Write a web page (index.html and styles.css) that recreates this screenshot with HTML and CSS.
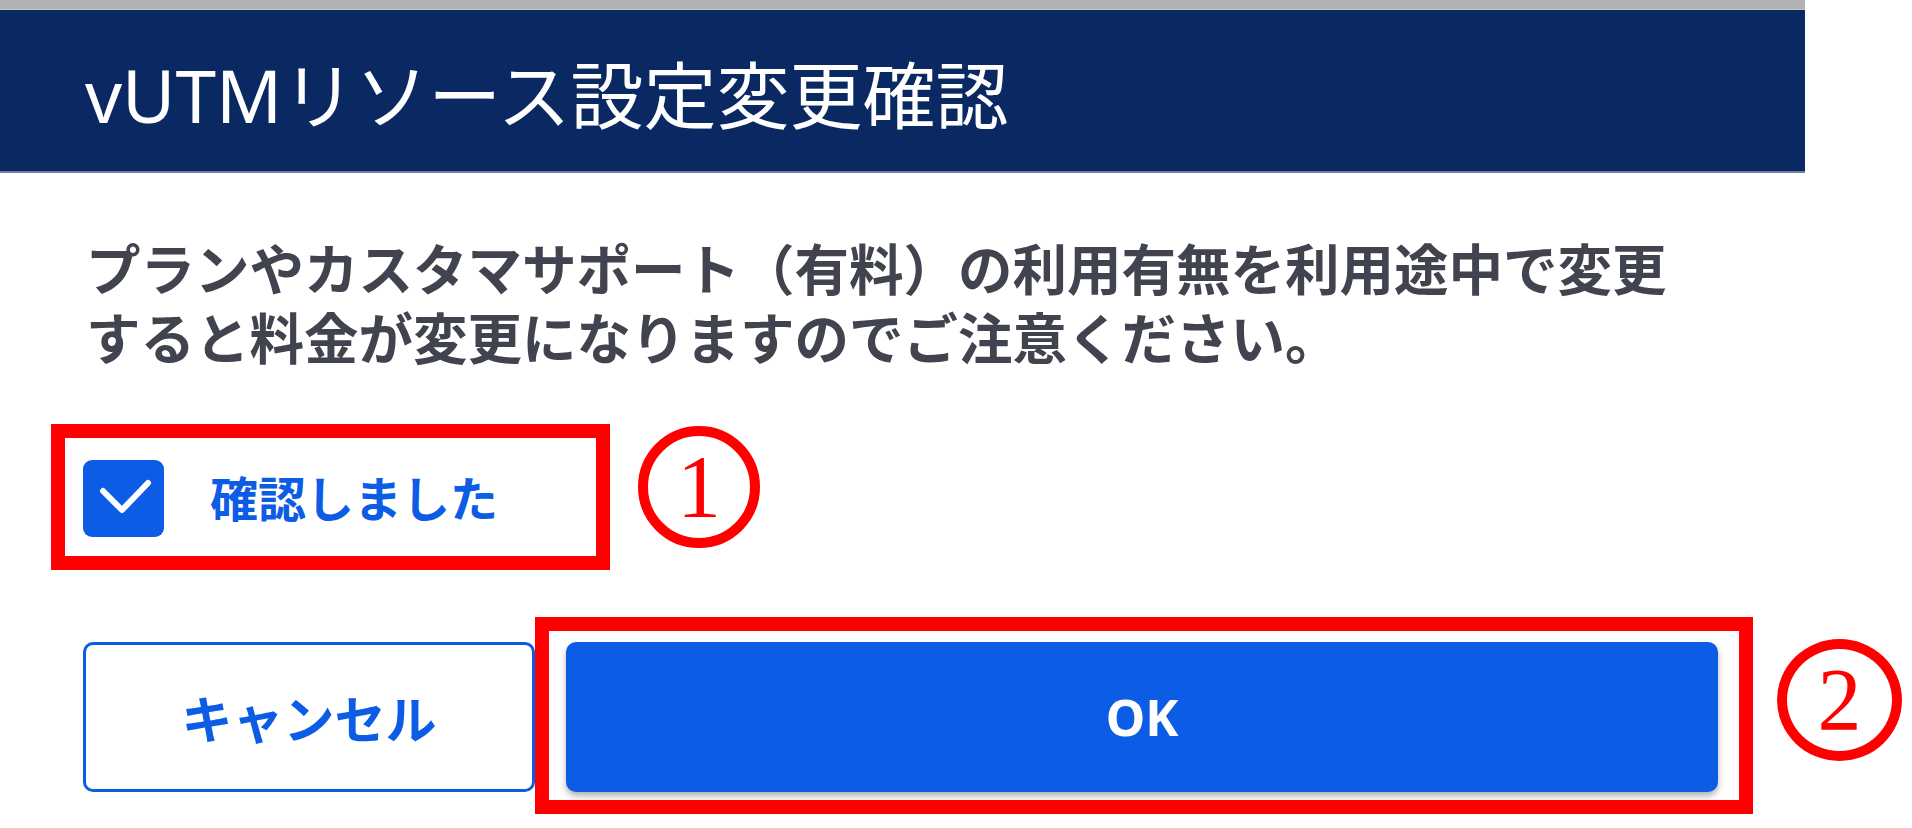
FILE: index.html
```html
<!DOCTYPE html>
<html lang="ja">
<head>
    <meta charset="UTF-8">
    <meta name="viewport" content="width=device-width, initial-scale=1.0">
    <title>vUTMリソース設定変更確認</title>
    <link rel="stylesheet" href="styles.css">
</head>
<body>
    <div class="top-strip"></div>

    <div class="dialog">
        <div class="dialog-header">
            <h1>vUTMリソース設定変更確認</h1>
        </div>

        <div class="dialog-body">
            <p class="notice">プランやカスタマサポート（有料）の利用有無を利用途中で変更<br>すると料金が変更になりますのでご注意ください。</p>

            <label class="confirm-row">
                <span class="checkbox">
                    <svg width="81" height="77" viewBox="0 0 81 77">
                        <polyline points="20,31 39,50 65,23" fill="none" stroke="#fff" stroke-width="6" stroke-linecap="round" stroke-linejoin="round"/>
                    </svg>
                </span>
                <span class="confirm-text">確認しました</span>
                <span class="mark-box mark-box-1"></span>
                <span class="step-no step-1">1</span>
            </label>

            <div class="actions">
                <button type="button" class="btn btn-cancel">キャンセル</button>
                <button type="button" class="btn btn-ok">OK</button>
                <span class="mark-box mark-box-2"></span>
                <span class="step-no step-2">2</span>
            </div>
        </div>
    </div>
</body>
</html>
```

FILE: styles.css
```css
* {
    margin: 0;
    padding: 0;
    box-sizing: border-box;
}

body {
    font-family: 'Noto Sans', 'Noto Sans CJK JP', sans-serif;
    background: #fff;
    width: 1912px;
    height: 828px;
    overflow: hidden;
}

.top-strip {
    height: 10px;
    width: 1805px;
    background: #b2b2b2;
    border-bottom: 1px solid #c8c8c8;
}

.dialog {
    width: 1805px;
}

.dialog-header {
    height: 163px;
    background: #0a2862;
    border-bottom: 2px solid #6d7fa6;
    display: flex;
    align-items: center;
    padding: 8px 0 0 85px;
}

.dialog-header h1 {
    color: #fff;
    font-size: 73px;
    font-weight: 400;
    line-height: 1;
}

.dialog-body {
    padding-left: 83px;
}

.notice {
    margin-top: 62px;
    font-size: 54.5px;
    line-height: 69px;
    font-weight: 700;
    color: #41444f;
    white-space: nowrap;
    padding-left: 3px;
}

/* checkbox row */
.confirm-row {
    position: relative;
    display: flex;
    align-items: center;
    margin-top: 87px;
    height: 77px;
}

.checkbox {
    width: 81px;
    height: 77px;
    border-radius: 9px;
    background: #0c5ce6;
    display: block;
}

.checkbox svg {
    display: block;
}

.confirm-text {
    margin-left: 46px;
    font-size: 48px;
    font-weight: 700;
    color: #0c5ce6;
    line-height: 1;
}

/* buttons */
.actions {
    position: relative;
    display: flex;
    gap: 31px;
    margin-top: 105px;
}

.btn {
    height: 150px;
    border-radius: 10px;
    font-family: 'Noto Sans', 'Noto Sans CJK JP', sans-serif;
    font-weight: 700;
    font-size: 50px;
    cursor: pointer;
}

.btn-cancel {
    width: 452px;
    background: #fff;
    border: 3px solid #0c5ce6;
    color: #0c5ce6;
    font-size: 51px;
}

.btn-ok {
    width: 1152px;
    background: #0c5ce6;
    border: none;
    color: #fff;
    box-shadow: 0 4px 6px rgba(0, 0, 0, 0.3);
}

/* red annotation marks */
.mark-box {
    position: absolute;
    border: 14px solid #ff0000;
    pointer-events: none;
}

.mark-box-1 {
    left: -32px;
    top: -36px;
    width: 559px;
    height: 146px;
}

.mark-box-2 {
    left: 452px;
    top: -25px;
    width: 1218px;
    height: 197px;
}

.step-no {
    position: absolute;
    border: 10px solid #ff0000;
    border-radius: 50%;
    color: #ff0000;
    font-family: 'Liberation Serif', serif;
    font-size: 88px;
    line-height: 1;
    display: flex;
    align-items: center;
    justify-content: center;
}

.step-1 {
    left: 555px;
    top: -34px;
    width: 122px;
    height: 122px;
}

.step-2 {
    left: 1694px;
    top: -3px;
    width: 125px;
    height: 122px;
}
```
